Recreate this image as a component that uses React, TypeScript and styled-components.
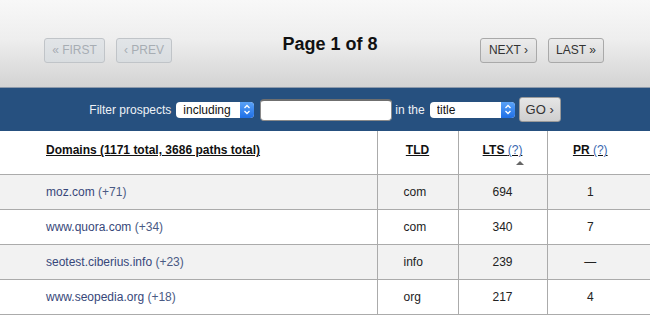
import React from "react";
import styled, { createGlobalStyle } from "styled-components";

const Global = createGlobalStyle`
  html, body { margin: 0; padding: 0; background: #fff; }
  body { font-family: "Liberation Sans", Arial, Helvetica, sans-serif; }
  * { box-sizing: border-box; }
`;

const Page = styled.div`
  width: 650px;
  height: 320px;
  overflow: hidden;
  background: #fff;
`;

const Pager = styled.div`
  height: 88px;
  background: linear-gradient(#f8f8f8 0%, #eeeeee 45%, #d3d3d3 100%);
  display: flex;
  align-items: flex-start;
  justify-content: space-between;
  padding: 38px 46px 0 44px;
  border-bottom: 1px solid #8d9aab;
`;

const Group = styled.div`
  display: flex;
  gap: 11px;
`;

const PageTitle = styled.div`
  font-size: 18px;
  font-weight: bold;
  color: #111;
  margin-top: -4px;
  margin-left: 8px;
`;

const PagerButton = styled.button<{ $disabled?: boolean; $w: number }>`
  width: ${(p) => p.$w}px;
  height: 25px;
  padding: 0;
  font-family: inherit;
  font-size: 12px;
  border-radius: 3px;
  border: 1px solid ${(p) => (p.$disabled ? "#c0c4c8" : "#a9a9a9")};
  color: ${(p) => (p.$disabled ? "#a7adb3" : "#333")};
  background: ${(p) =>
    p.$disabled
      ? "linear-gradient(#e2e5e8, #d9dde0)"
      : "linear-gradient(#ececec, #d8d8d8)"};
  line-height: 23px;
`;

const FilterBar = styled.div`
  height: 43px;
  background: #26507f;
  display: flex;
  align-items: center;
  justify-content: center;
  padding-left: 0;
  color: #eef2f6;
  font-size: 12px;
`;

const Label = styled.span<{ $ml?: number; $mr?: number }>`
  margin-left: ${(p) => p.$ml ?? 0}px;
  margin-right: ${(p) => p.$mr ?? 0}px;
`;

const SelectWrap = styled.div<{ $w: number; $mr: number }>`
  position: relative;
  width: ${(p) => p.$w}px;
  height: 16px;
  margin-right: ${(p) => p.$mr}px;
`;

const NativeSelect = styled.select`
  appearance: none;
  -webkit-appearance: none;
  width: 100%;
  height: 16px;
  border: none;
  border-radius: 4px;
  background: #fff;
  font-family: inherit;
  font-size: 12px;
  color: #111;
  padding: 0 0 0 7px;
  line-height: 16px;
  outline: none;
`;

const Stepper = styled.span`
  position: absolute;
  top: 0;
  right: 0;
  width: 14px;
  height: 16px;
  border-radius: 0 4px 4px 0;
  background: linear-gradient(#5aa2f7, #1f6fe6);
  display: flex;
  align-items: center;
  justify-content: center;
  pointer-events: none;
`;

const TextBox = styled.input`
  width: 132px;
  height: 22px;
  border-radius: 4px;
  border: 1px solid #8a8a8a;
  border-top: 2px solid #6f6f6f;
  background: #fff;
`;

const GoButton = styled.button`
  width: 42px;
  height: 25px;
  border-radius: 3px;
  border: 1px solid #9a9a9a;
  background: linear-gradient(#e6e6e6, #cfcfcf);
  font-family: inherit;
  font-size: 13px;
  color: #333;
  padding: 0;
`;

const Table = styled.table`
  border-collapse: collapse;
  width: 650px;
  table-layout: fixed;
`;

const Row = styled.tr<{ $alt?: boolean }>`
  background: ${(p) => (p.$alt ? "#f2f2f2" : "#fff")};
  border-bottom: 1px solid #ababab;
`;

const HeadCell = styled.th<{ $w?: number; $pl?: number; $pr?: number; $left?: boolean }>`
  height: 43px;
  ${(p) => (p.$w ? `width: ${p.$w}px;` : "")}
  font-size: 12px;
  font-weight: bold;
  color: #111;
  text-align: ${(p) => (p.$left ? "left" : "center")};
  padding: 0 ${(p) => p.$pr ?? 0}px 0 ${(p) => p.$pl ?? 0}px;
  border-left: 1px solid #ababab;
  position: relative;
  vertical-align: middle;
  &:first-child { border-left: none; }
`;

const HeadText = styled.span`
  text-decoration: underline;
  position: relative;
  top: -2px;
`;

const Help = styled.span`
  color: #3a68b0;
  font-weight: normal;
`;

const SortArrow = styled.span`
  position: absolute;
  left: 50%;
  top: 30px;
  margin-left: 13px;
  width: 0;
  height: 0;
  border-left: 4px solid transparent;
  border-right: 4px solid transparent;
  border-bottom: 4px solid #666;
`;

const Cell = styled.td<{ $align: "left" | "center"; $pl?: number; $pr?: number }>`
  height: 35px;
  font-size: 12px;
  color: #222;
  text-align: ${(p) => p.$align};
  padding: 0 ${(p) => p.$pr ?? 0}px 0 ${(p) => p.$pl ?? 0}px;
  border-left: 1px solid #ababab;
  vertical-align: middle;
  &:first-child { border-left: none; }
`;

const DomainLink = styled.a`
  color: #37477a;
  text-decoration: none;
`;

const Count = styled.span`
  color: #4a5a84;
`;

const Chevrons = () => (
  <svg width="8" height="11" viewBox="0 0 8 11">
    <path d="M1.5 4 L4 1.5 L6.5 4 M1.5 7 L4 9.5 L6.5 7" fill="none" stroke="#fff" strokeWidth="1.3" />
  </svg>
);

const rows = [
  { d: "moz.com", c: "+71", tld: "com", lts: "694", pr: "1" },
  { d: "www.quora.com", c: "+34", tld: "com", lts: "340", pr: "7" },
  { d: "seotest.ciberius.info", c: "+23", tld: "info", lts: "239", pr: "—" },
  { d: "www.seopedia.org", c: "+18", tld: "org", lts: "217", pr: "4" },
];

export default function App() {
  return (
    <Page>
      <Global />
      <Pager>
        <Group>
          <PagerButton $disabled $w={61}>« FIRST</PagerButton>
          <PagerButton $disabled $w={56}>‹ PREV</PagerButton>
        </Group>
        <PageTitle>Page 1 of 8</PageTitle>
        <Group>
          <PagerButton $w={57}>NEXT ›</PagerButton>
          <PagerButton $w={56}>LAST »</PagerButton>
        </Group>
      </Pager>
      <FilterBar>
        <Label $mr={5}>Filter prospects</Label>
        <SelectWrap $w={78} $mr={6}>
          <NativeSelect defaultValue="including">
            <option value="including">including</option>
            <option value="excluding">excluding</option>
          </NativeSelect>
          <Stepper>
            <Chevrons />
          </Stepper>
        </SelectWrap>
        <TextBox type="text" />
        <Label $ml={3} $mr={5}>in the</Label>
        <SelectWrap $w={85} $mr={4}>
          <NativeSelect defaultValue="title">
            <option value="title">title</option>
            <option value="url">url</option>
          </NativeSelect>
          <Stepper>
            <Chevrons />
          </Stepper>
        </SelectWrap>
        <GoButton>GO ›</GoButton>
      </FilterBar>
      <Table>
        <thead>
          <Row>
            <HeadCell $w={377} $pl={46} $left>
              <HeadText>Domains (1171 total, 3686 paths total)</HeadText>
            </HeadCell>
            <HeadCell $w={81}>
              <HeadText>TLD</HeadText>
            </HeadCell>
            <HeadCell $w={89}>
              <HeadText>
                LTS <Help>(?)</Help>
              </HeadText>
              <SortArrow />
            </HeadCell>
            <HeadCell $pr={17}>
              <HeadText>
                PR <Help>(?)</Help>
              </HeadText>
            </HeadCell>
          </Row>
        </thead>
        <tbody>
          {rows.map((r, i) => (
            <Row key={r.d} $alt={i % 2 === 0}>
              <Cell $align="left" $pl={46}>
                <DomainLink href="#">
                  {r.d} <Count>({r.c})</Count>
                </DomainLink>
              </Cell>
              <Cell $align="left" $pl={26}>{r.tld}</Cell>
              <Cell $align="center">{r.lts}</Cell>
              <Cell $align="center" $pr={17}>{r.pr}</Cell>
            </Row>
          ))}
        </tbody>
      </Table>
    </Page>
  );
}
